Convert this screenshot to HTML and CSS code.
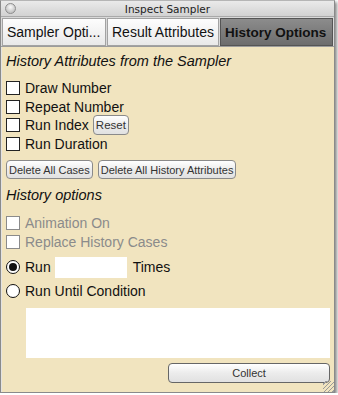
FILE: index.html
```html
<!DOCTYPE html>
<html lang="en">
<head>
    <meta charset="UTF-8">
    <title>Inspect Sampler</title>
    <link rel="stylesheet" href="styles.css">
</head>
<body>
    <div class="window">
        <div class="titlebar">
            <span class="close"></span>
            <span class="title">Inspect Sampler</span>
        </div>

        <div class="tabs">
            <div class="tab">Sampler Opti...</div>
            <div class="tab">Result Attributes</div>
            <div class="tab active">History Options</div>
        </div>

        <div class="panel">
            <div class="heading">History Attributes from the Sampler</div>

            <div class="checks">
                <label class="row"><span class="box"></span>Draw Number</label>
                <label class="row"><span class="box"></span>Repeat Number</label>
                <label class="row"><span class="box"></span>Run Index <button class="btn small">Reset</button></label>
                <label class="row"><span class="box"></span>Run Duration</label>
            </div>

            <div class="buttons">
                <button class="btn">Delete All Cases</button>
                <button class="btn">Delete All History Attributes</button>
            </div>

            <div class="heading second">History options</div>

            <div class="checks disabled">
                <label class="row"><span class="box"></span>Animation On</label>
                <label class="row"><span class="box"></span>Replace History Cases</label>
            </div>

            <div class="radios">
                <label class="row"><span class="radio on"></span>Run <span class="field"></span> Times</label>
                <label class="row"><span class="radio"></span>Run Until Condition</label>
            </div>

            <div class="condition"></div>

            <div class="footer">
                <button class="btn collect">Collect</button>
            </div>
            <span class="grip"></span>
        </div>
    </div>
</body>
</html>
```

FILE: styles.css
```css
* {
    margin: 0;
    padding: 0;
    box-sizing: border-box;
}

body {
    background: #fff;
    font-family: 'Liberation Sans', Arial, sans-serif;
    color: #111;
}

.window {
    width: 335px;
    height: 393px;
    border: 1px solid #8a8a8a;
    border-top-color: #b5b5b5;
    box-shadow: 2px 2px 3px rgba(0, 0, 0, 0.45);
    display: flex;
    flex-direction: column;
    background: #f1e4bf;
}

/* Title bar */
.titlebar {
    height: 16px;
    background: linear-gradient(#eaeaea, #d2d2d2);
    border-bottom: 1px solid #a9a9a9;
    display: flex;
    align-items: center;
    justify-content: center;
    position: relative;
}

.close {
    position: absolute;
    left: 4px;
    top: 2px;
    width: 11px;
    height: 11px;
    border-radius: 50%;
    border: 1px solid #8d8d8d;
    background: radial-gradient(circle at 50% 35%, #fafafa, #c4c4c4 70%);
}

.title {
    font-family: 'DejaVu Sans', sans-serif;
    font-size: 10.5px;
    color: #222;
}

/* Tabs */
.tabs {
    display: flex;
    height: 30px;
    padding: 1px 1px 0 1px;
    background: #d9d9d9;
    border-bottom: 1px solid #9c9c9c;
}

.tab {
    height: 28px;
    display: flex;
    align-items: center;
    padding: 0 4px;
    font-size: 14px;
    white-space: nowrap;
    overflow: hidden;
    color: #111;
    background: linear-gradient(#fdfdfd, #e9e9e9);
    border: 1px solid #a3a3a3;
    margin-right: 1px;
}

.tab:nth-child(1) { width: 104px; }
.tab:nth-child(2) { width: 112px; }

.tab.active {
    flex: 1;
    font-weight: bold;
    font-size: 13.5px;
    background: linear-gradient(#8c8c8c, #6d6d6d);
    color: #111;
    border-color: #555;
    margin-right: 0;
}

/* Panel */
.panel {
    flex: 1;
    position: relative;
    padding: 4px 4px 0 4px;
    border-left: 1px solid #e3e3e3;
}

.heading {
    font-style: italic;
    font-size: 14.5px;
    height: 20px;
    line-height: 20px;
    margin-bottom: 8px;
}

.heading.second {
    margin-top: 6px;
    margin-bottom: 9px;
}

.row {
    display: flex;
    align-items: center;
    height: 18.5px;
    font-size: 14px;
}

.box {
    width: 14px;
    height: 14px;
    border: 1px solid #222;
    background: #fff;
    margin-right: 5px;
}

.checks.disabled .row {
    color: #8b8b8b;
}

.checks.disabled .box {
    border-color: #8b8b8b;
}

.btn {
    font-family: 'Liberation Sans', Arial, sans-serif;
    font-size: 11px;
    color: #333;
    height: 19px;
    padding: 0 2px;
    border: 1px solid #8a8a8a;
    border-radius: 4px;
    background: linear-gradient(#ffffff, #ececec 50%, #e1e1e1);
}

.btn.small {
    margin-left: 4px;
    height: 20px;
    font-size: 11.5px;
    padding: 0 2px;
}

.buttons {
    display: flex;
    gap: 5px;
    margin-top: 7px;
}

.radios {
    margin-top: 4px;
}

.radios .row {
    height: 24px;
}

.radio {
    width: 14px;
    height: 14px;
    border: 1.5px solid #111;
    border-radius: 50%;
    background: #fff;
    margin-right: 5px;
    display: flex;
    align-items: center;
    justify-content: center;
}

.radio.on::after {
    content: "";
    width: 8px;
    height: 8px;
    border-radius: 50%;
    background: #111;
}

.field {
    width: 72px;
    height: 21px;
    background: #fff;
    margin: 0 6px 0 4px;
}

.condition {
    height: 50px;
    margin: 5px 0 0 20px;
    background: #fff;
}

.footer {
    display: flex;
    justify-content: flex-end;
    margin-top: 5px;
}

.btn.collect {
    width: 162px;
    height: 20px;
    font-size: 11px;
    border-color: #666;
}

.grip {
    position: absolute;
    right: 0;
    bottom: 0;
    width: 11px;
    height: 11px;
    background: repeating-linear-gradient(135deg, transparent 0 2px, #9a9a9a 2px 3px);
}
```
